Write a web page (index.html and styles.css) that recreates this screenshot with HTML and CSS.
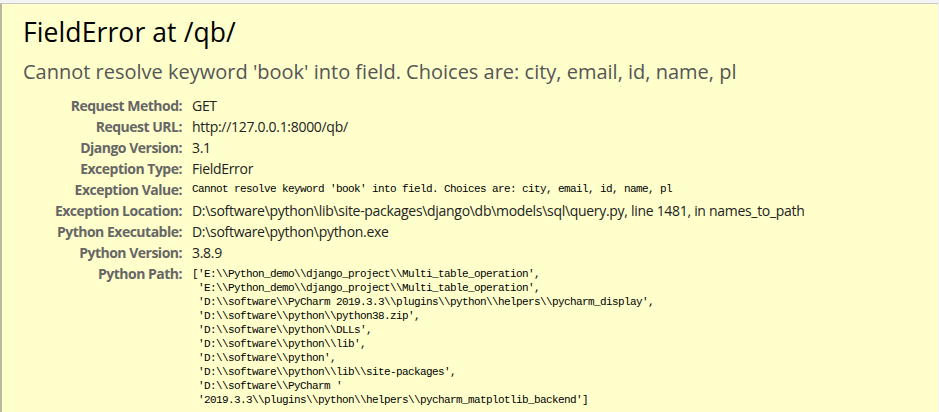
FILE: index.html
```html
<!DOCTYPE html>
<html>
<head>
<meta charset="utf-8">
<title>FieldError at /qb/</title>
<link rel="stylesheet" href="styles.css">
</head>
<body>
<div class="summary">
  <h1 class="title">FieldError at /qb/</h1>
  <h2 class="subtitle">Cannot resolve keyword 'book' into field. Choices are: city, email, id, name, pl</h2>
  <div class="meta">
    <div class="label">Request Method:</div><div class="value">GET</div>
    <div class="label">Request URL:</div><div class="value">http://127.0.0.1:8000/qb/</div>
    <div class="label">Django Version:</div><div class="value">3.1</div>
    <div class="label">Exception Type:</div><div class="value">FieldError</div>
    <div class="label">Exception Value:</div><div class="value"><pre class="mono">Cannot resolve keyword 'book' into field. Choices are: city, email, id, name, pl</pre></div>
    <div class="label">Exception Location:</div><div class="value">D:\software\python\lib\site-packages\django\db\models\sql\query.py, line 1481, in names_to_path</div>
    <div class="label">Python Executable:</div><div class="value">D:\software\python\python.exe</div>
    <div class="label">Python Version:</div><div class="value">3.8.9</div>
    <div class="label">Python Path:</div><div class="value"><pre class="mono path">['E:\\Python_demo\\django_project\\Multi_table_operation',
 'E:\\Python_demo\\django_project\\Multi_table_operation',
 'D:\\software\\PyCharm 2019.3.3\\plugins\\python\\helpers\\pycharm_display',
 'D:\\software\\python\\python38.zip',
 'D:\\software\\python\\DLLs',
 'D:\\software\\python\\lib',
 'D:\\software\\python',
 'D:\\software\\python\\lib\\site-packages',
 'D:\\software\\PyCharm '
 '2019.3.3\\plugins\\python\\helpers\\pycharm_matplotlib_backend']</pre></div>
  </div>
</div>
</body>
</html>
```

FILE: styles.css
```css
html, body { margin: 0; padding: 0; }
body {
  background: #f3f3f3;
  font-family: "Open Sans", "Noto Sans", sans-serif;
  color: #000;
  padding-top: 3px;
  padding-right: 1px;
  overflow: hidden;
}
.summary {
  background: #ffc;
  border-top: 1px solid #c8c8c8;
  border-left: 2px solid #b8b8a0;
  padding: 12px 20px 10px 21px;
  min-height: 400px;
}
.title {
  margin: 0;
  font-weight: normal;
  font-size: 26.5px;
  line-height: 32px;
  letter-spacing: 0.1px;
}
.subtitle {
  margin: 10px 0 9px 0;
  font-weight: normal;
  font-size: 20px;
  line-height: 28px;
  color: #555;
  letter-spacing: 0;
}
.meta {
  display: grid;
  grid-template-columns: 159px 1fr;
  column-gap: 10px;
  font-size: 14px;
  line-height: 21px;
}
.label {
  text-align: right;
  font-weight: bold;
  color: #666;
  letter-spacing: -0.5px;
}
.value {
  color: #222;
  letter-spacing: -0.3px;
}
.mono {
  margin: 0;
  font-family: "Liberation Mono", "DejaVu Sans Mono", monospace;
  font-size: 11px;
  line-height: 21px;
  color: #000;
  letter-spacing: -0.6px;
  white-space: pre-wrap;
}
.path {
  line-height: 14px;
  padding-top: 4px;
}
```
